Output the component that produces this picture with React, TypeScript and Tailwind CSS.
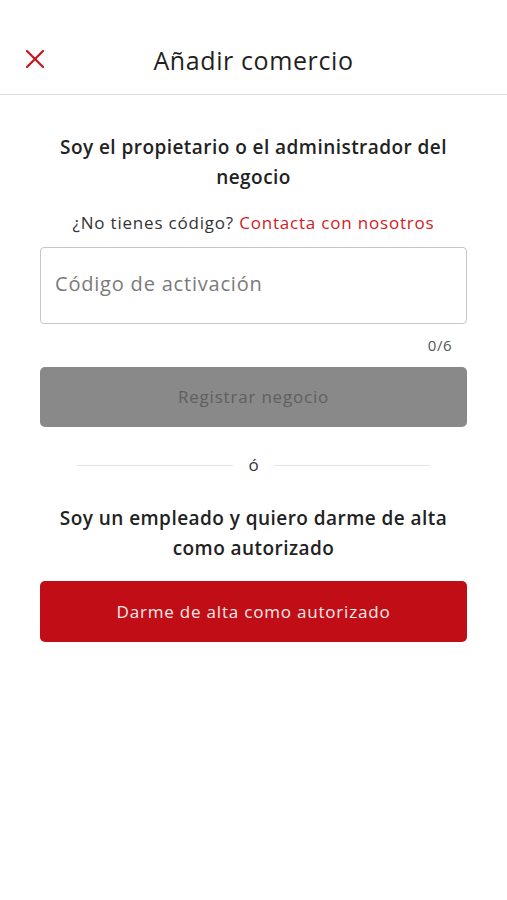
import { X } from "lucide-react";

export default function App() {
  return (
    <div className="min-h-[900px] bg-white font-['Open_Sans',sans-serif] text-[#1f1f1f]">
      <header className="relative flex h-[95px] justify-center border-b border-[#dcdcdc] pt-[45px]">
        <button className="absolute left-[19px] top-[43px] text-[#c8141c]">
          <X size={32} strokeWidth={1.6} />
        </button>
        <h1 className="text-[25px] font-normal leading-[30px] tracking-[0.6px]">Añadir comercio</h1>
      </header>

      <main className="px-[40px]">
        <h2 className="mt-[37px] px-[6px] text-center text-[19px] font-semibold leading-[30px] tracking-[0.45px] text-[#222]">
          Soy el propietario o el administrador del negocio
        </h2>
        <p className="mt-[21px] text-center text-[17px] leading-[20px] tracking-[0.8px] text-[#333]">
          ¿No tienes código? <span className="text-[#d21a22]">Contacta con nosotros</span>
        </p>

        <div className="mt-[14px] flex h-[77px] items-start rounded-[4px] border border-[#c6c6c6] px-[14px] pt-[23px]">
          <span className="text-[20px] leading-[26px] tracking-[0.8px] text-[#7a7a7a]">Código de activación</span>
        </div>
        <div className="mt-[12px] pr-[15px] text-right text-[15px] leading-[18px] tracking-[0.5px] text-[#555]">0/6</div>

        <button className="mt-[13px] flex h-[60px] w-full items-center justify-center rounded-[5px] bg-[#898989] text-[17px] tracking-[0.8px] text-[#5f5f5f]">
          Registrar negocio
        </button>

        <div className="mt-[28px] flex items-center justify-center gap-[15px] px-[37px]">
          <div className="h-px flex-1 bg-[#e4e4e4]" />
          <span className="text-[17px] leading-[20px] text-[#333]">ó</span>
          <div className="h-px flex-1 bg-[#e4e4e4]" />
        </div>

        <h2 className="mt-[28px] px-[6px] text-center text-[19px] font-semibold leading-[30px] tracking-[0.45px] text-[#222]">
          Soy un empleado y quiero darme de alta como autorizado
        </h2>

        <button className="mt-[18px] flex h-[61px] w-full items-center justify-center rounded-[5px] bg-[#c10d16] text-[17px] tracking-[0.8px] text-[#fbeaea]">
          Darme de alta como autorizado
        </button>
      </main>
    </div>
  );
}
